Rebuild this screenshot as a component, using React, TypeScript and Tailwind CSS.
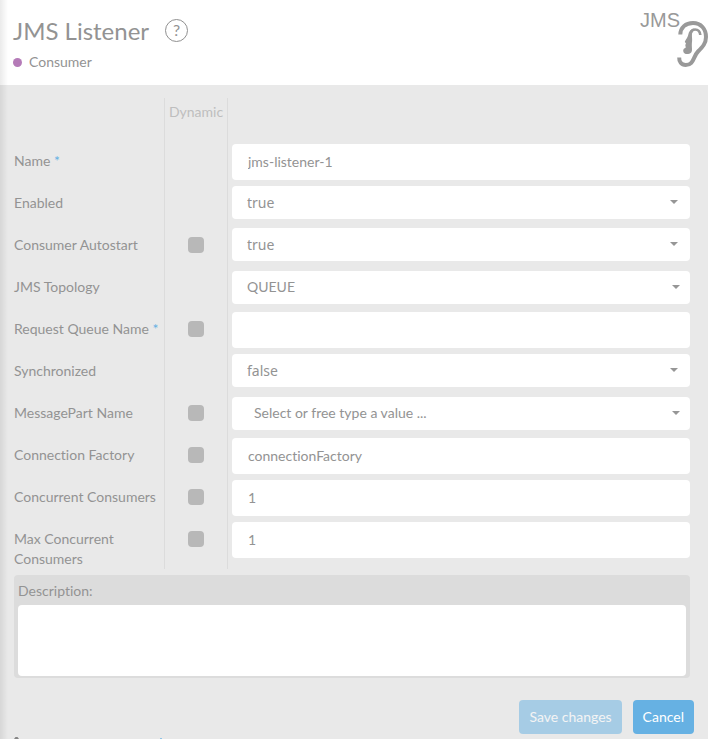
import React, { useState } from "react";

type Field = {
  id: string;
  label: string;
  value: string;
  required?: boolean;
  dynamic?: boolean;
  kind: "text" | "select" | "combo";
  options?: string[];
};

const fields: Field[] = [
  { id: "name", label: "Name", value: "jms-listener-1", required: true, kind: "text" },
  { id: "enabled", label: "Enabled", value: "true", kind: "select", options: ["true", "false"] },
  { id: "autostart", label: "Consumer Autostart", value: "true", dynamic: true, kind: "select", options: ["true", "false"] },
  { id: "topology", label: "JMS Topology", value: "QUEUE", kind: "combo", options: ["QUEUE", "TOPIC"] },
  { id: "queueName", label: "Request Queue Name", value: "", required: true, dynamic: true, kind: "text" },
  { id: "synchronized", label: "Synchronized", value: "false", kind: "select", options: ["true", "false"] },
  { id: "messagePart", label: "MessagePart Name", value: "", dynamic: true, kind: "combo" },
  { id: "connectionFactory", label: "Connection Factory", value: "connectionFactory", dynamic: true, kind: "text" },
  { id: "consumers", label: "Concurrent Consumers", value: "1", dynamic: true, kind: "text" },
  { id: "maxConsumers", label: "Max Concurrent Consumers", value: "1", dynamic: true, kind: "text" },
];

const EarLogo = () => (
  <svg width="32" height="48" viewBox="0 0 32 48" fill="none" stroke="#999" aria-hidden="true">
    <path
      d="M4.300 14.500C4.500 7.500 9.500 3 17 3c8 0 13 6 13 14 0 6.500-3.500 10-8 14.500-5 5-4 13.500-12.300 13.500-4.500 0-6.700-3.300-6.500-7.500"
      strokeWidth="4"
    />
    <path d="M14 17C14.200 11.500 16 9.500 19 9.500c3 0 5 2 5.300 5.500" strokeWidth="2.600" />
    <path
      d="M18 8.500c-3.500.6-5.200 3.200-5.700 6-.4 2.500-2 4.500-3.300 6.800-.5 1 .2 1.400 1 1.600l-.7 2.300.5 2.300c-1.600.8-2.600 1.700-2.600 3.200 0 2.600 2.300 3.600 5 3.300 2.800-.3 4-2 3.800-5-.2-3-.3-5 .1-8 .4-3-1-6.500.6-9z"
      fill="#999"
      stroke="none"
    />
  </svg>
);

const Arrow = ({ className }: { className: string }) => (
  <svg
    width="8"
    height="4"
    viewBox="0 0 8 4"
    className={`absolute pointer-events-none ${className}`}
    aria-hidden="true"
  >
    <path d="M0 0h8L4 4z" fill="#969696" />
  </svg>
);

const App: React.FC = () => {
  const [values, setValues] = useState<Record<string, string>>(
    Object.fromEntries(fields.map((f) => [f.id, f.value]))
  );

  const handleChange = (id: string, value: string) => {
    setValues({ ...values, [id]: value });
  };

  const renderControl = (field: Field) => {
    if (field.kind === "text") {
      return (
        <input
          id={field.id}
          type="text"
          className="block w-full h-9 px-4 pb-0.5 bg-white rounded"
          value={values[field.id]}
          onChange={(e) => handleChange(field.id, e.target.value)}
        />
      );
    }
    if (field.kind === "select") {
      return (
        <div className="relative">
          <select
            id={field.id}
            className="block w-full h-[33px] px-[15px] bg-white rounded-sm appearance-none font-['Noto_Sans',sans-serif]"
            value={values[field.id]}
            onChange={(e) => handleChange(field.id, e.target.value)}
          >
            {field.options?.map((option) => (
              <option key={option}>{option}</option>
            ))}
          </select>
          <Arrow className="right-3 top-3.5" />
        </div>
      );
    }
    return (
      <div className="relative mt-px">
        <select
          id={field.id}
          className={`block w-full h-[33px] pb-0.5 bg-white rounded appearance-none ${
            field.options ? "px-[15px]" : "px-[22px]"
          }`}
          value={values[field.id]}
          onChange={(e) => handleChange(field.id, e.target.value)}
        >
          {field.options ? (
            field.options.map((option) => <option key={option}>{option}</option>)
          ) : (
            <option value="">Select or free type a value ...</option>
          )}
        </select>
        <Arrow className="right-2.5 top-3.5" />
      </div>
    );
  };

  return (
    <div className="relative h-screen overflow-hidden bg-[#e9e9e9] text-[#939393] text-sm leading-5 font-[Lato,sans-serif] [font-variant-ligatures:no-common-ligatures]">
      <header className="flex justify-between bg-white h-[85px] pl-[13px]">
        <div className="pt-[15px]">
          <div className="flex items-center gap-4">
            <h1 className="text-2xl leading-8">JMS Listener</h1>
            <button
              type="button"
              aria-label="Help"
              className="size-[23px] -mt-0.5 rounded-full border border-[#909090] text-base leading-5"
            >
              ?
            </button>
          </div>
          <p className="flex items-center gap-[7px] mt-[5px]">
            <span className="size-[9px] rounded-full bg-[#b57bb8]" />
            Consumer
          </p>
        </div>
        <div className="flex items-start">
          <span className="pt-2 text-xl leading-6 text-[#999] font-['Liberation_Sans',sans-serif]">
            JMS
          </span>
          <div className="mt-5 -ml-1">
            <EarLogo />
          </div>
        </div>
      </header>

      <form className="pt-[13px]" onSubmit={(e) => e.preventDefault()}>
        <div className="pl-[14px] pr-[18px]">
          <div className="flex h-[43px]">
            <div className="w-[150px] shrink-0" />
            <div className="w-16 shrink-0 border-x border-[#dcdcdc] pt-1 text-center text-[#bebebe]">
              Dynamic
            </div>
          </div>
          {fields.map((field) => (
            <div key={field.id} className="flex min-h-[42px]">
              <label htmlFor={field.id} className="w-[150px] shrink-0 pt-[10px]">
                {field.label}
                {field.required && <span className="text-[#66b1e3]"> *</span>}
              </label>
              <div className="flex w-16 shrink-0 justify-center border-x border-[#dcdcdc] pt-3">
                {field.dynamic && (
                  <input
                    type="checkbox"
                    aria-label={`${field.label} dynamic`}
                    className="size-4 appearance-none rounded bg-[#b8b8b8] checked:bg-[#66b1e3]"
                  />
                )}
              </div>
              <div className="min-w-0 grow pl-1 pt-[3px]">{renderControl(field)}</div>
            </div>
          ))}

          <div className="mt-1.5 rounded bg-[#dcdcdc] px-1 pt-1.5 pb-0.5">
            <label htmlFor="description" className="block">
              Description:
            </label>
            <textarea
              id="description"
              className="mt-1 block h-[71px] w-full resize-none rounded bg-white px-3 py-2"
            />
          </div>
        </div>

        <div className="mt-[22px] flex justify-end gap-[11px] pr-[14px] text-white">
          <button
            type="submit"
            disabled
            className="h-[34px] rounded bg-[#66b1e3] px-2.5 opacity-50"
          >
            Save changes
          </button>
          <button type="button" className="h-[34px] rounded bg-[#66b1e3] px-2.5">
            Cancel
          </button>
        </div>
      </form>

      {/* top of the next section, cut off by the panel edge */}
      <div className="mt-[3px] flex gap-[141px] pl-[14px]" aria-hidden="true">
        <svg width="5" height="8" viewBox="0 0 5 8" fill="#858585">
          <path d="M1.500 0h2L5 2v6H0V2z" />
        </svg>
        <svg width="3" height="8" viewBox="0 0 3 8" fill="#8fc3e6">
          <path d="M0 1h2v7H0z" />
        </svg>
      </div>

      <div className="pointer-events-none absolute inset-y-0 left-0 w-2 bg-linear-to-r from-black/8 to-transparent" />
    </div>
  );
};

export default App;
